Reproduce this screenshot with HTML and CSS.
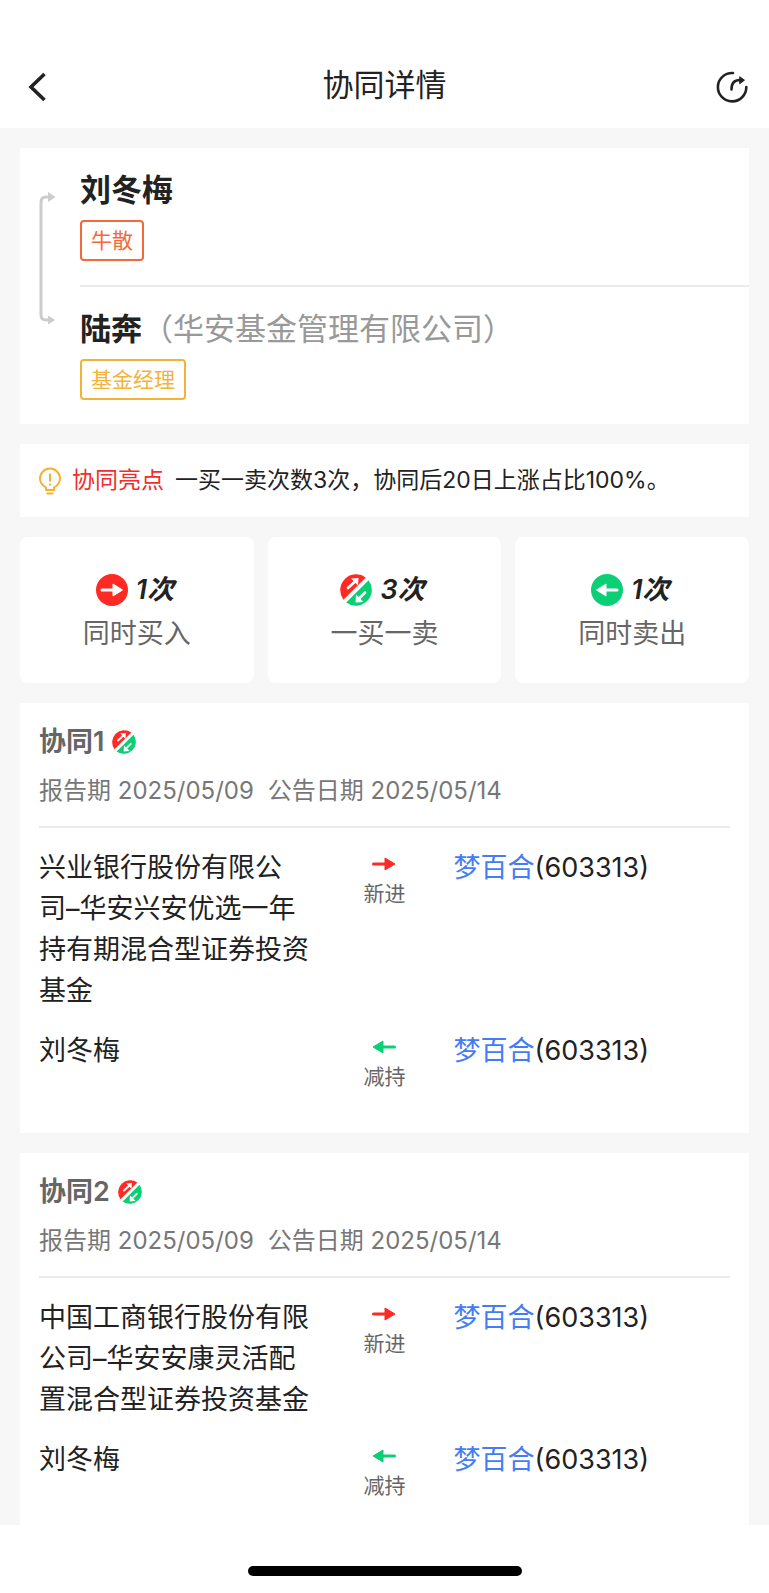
FILE: index.html
```html
<!DOCTYPE html>
<html lang="zh-CN">
<head>
  <meta charset="UTF-8">
  <meta name="viewport" content="width=device-width, initial-scale=1.0">
  <title>协同详情</title>
  <link rel="stylesheet" href="styles.css">
</head>
<body>
  <!-- Shared icons -->
  <svg class="sprite" aria-hidden="true">
    <symbol id="icon-buy" viewBox="0 0 32 32">
      <circle cx="16" cy="16" r="16" fill="#ff2a24"/>
      <path d="M6 16h14" stroke="#fff" stroke-width="3" stroke-linecap="round"/>
      <path d="M17 10l9.500 6-9.500 6z" fill="#fff" stroke="#fff" stroke-linejoin="round"/>
    </symbol>
    <symbol id="icon-sell" viewBox="0 0 32 32">
      <circle cx="16" cy="16" r="16" fill="#0acf74"/>
      <path d="M26 16H12" stroke="#fff" stroke-width="3" stroke-linecap="round"/>
      <path d="M15 10L5.500 16l9.500 6z" fill="#fff" stroke="#fff" stroke-linejoin="round"/>
    </symbol>
    <symbol id="icon-mixed" viewBox="0 0 32 32">
      <path d="M3.400 25.800A16 16 0 0 1 25.800 3.400z" fill="#ff2a24"/>
      <path d="M28.600 6.200A16 16 0 0 1 6.200 28.600z" fill="#0acf74"/>
      <path d="M8 14L14.500 8M25 18.500L19 24.500" stroke="#fff" stroke-width="2.600" stroke-linecap="round"/>
      <path d="M11 4.500l7.500-.5-.5 7.500zM16 20.500l-.5 8 8-.5z" fill="#fff"/>
    </symbol>
    <symbol id="icon-in" viewBox="0 0 24 14">
      <path d="M1.500 7H16" stroke="#ff2a24" stroke-width="3" stroke-linecap="round"/>
      <path d="M13 1l10 6-10 6z" fill="#ff2a24" stroke="#ff2a24" stroke-linejoin="round"/>
    </symbol>
    <symbol id="icon-out" viewBox="0 0 24 14">
      <path d="M22.500 7H8" stroke="#0acf74" stroke-width="3" stroke-linecap="round"/>
      <path d="M11 1L1 7l10 6z" fill="#0acf74" stroke="#0acf74" stroke-linejoin="round"/>
    </symbol>
  </svg>

  <header class="navbar">
    <button class="nav-button" type="button" aria-label="返回">
      <svg width="20" height="32" viewBox="0 0 20 32"><path d="M17.500 3L4 16l13.500 13" fill="none" stroke="#222" stroke-width="3.600"/></svg>
    </button>
    <h1>协同详情</h1>
    <button class="nav-button" type="button" aria-label="分享">
      <svg width="32" height="32" viewBox="0 0 32 32" fill="none" stroke="#222" stroke-width="2.600" stroke-linecap="round">
        <path d="M17 2A14.200 14.200 0 1 0 30.300 16"/>
        <path d="M15.500 18.500C15.500 12 18 9 24 9"/>
        <path d="M24 6l4.500 3.200L24 12.500z" fill="#222" stroke-width="1" stroke-linejoin="round"/>
      </svg>
    </button>
  </header>

  <main class="content">
    <!-- People -->
    <section class="people">
      <svg class="connector" width="18" height="136" viewBox="0 0 18 136">
        <path d="M11 7H8Q3 7 3 12V125Q3 130 8 130H11" fill="none" stroke="#ccc" stroke-width="3"/>
        <path d="M10 2l7.500 5-7.500 5zM10 125.500l7 4.500-7 4.500z" fill="#ccc"/>
      </svg>
      <div class="people-list">
        <div class="person">
          <h2>刘冬梅</h2>
          <span class="tag tag-orange">牛散</span>
        </div>
        <div class="person">
          <h2>陆奔<span class="company">（华安基金管理有限公司）</span></h2>
          <span class="tag tag-yellow">基金经理</span>
        </div>
      </div>
    </section>

    <!-- Highlight -->
    <section class="highlight">
      <svg width="22" height="28" viewBox="0 0 22 28" fill="none" stroke="#f5b22e" stroke-width="2">
        <path d="M7 23V20.500C3.500 18.500 1 15.500 1 11.500a10 10 0 0 1 20 0c0 4-2.500 7-6 9V23z" stroke-linejoin="round"/>
        <path d="M11 6.500v8M11 16.500v2M7.500 26.500h7"/>
      </svg>
      <strong>协同亮点</strong>
      <p>一买一卖次数3次，协同后20日上涨占比100%。</p>
    </section>

    <!-- Counters -->
    <section class="stats">
      <div class="stat">
        <div class="stat-value"><svg width="32" height="32"><use href="#icon-buy"/></svg><em>1次</em></div>
        <div class="stat-label">同时买入</div>
      </div>
      <div class="stat">
        <div class="stat-value"><svg width="32" height="32"><use href="#icon-mixed"/></svg><em>3次</em></div>
        <div class="stat-label">一买一卖</div>
      </div>
      <div class="stat">
        <div class="stat-value"><svg width="32" height="32"><use href="#icon-sell"/></svg><em>1次</em></div>
        <div class="stat-label">同时卖出</div>
      </div>
    </section>

    <!-- Records -->
    <section class="record">
      <h3>协同1<svg width="24" height="24"><use href="#icon-mixed"/></svg></h3>
      <p class="dates"><span>报告期 2025/05/09</span><span>公告日期 2025/05/14</span></p>
      <div class="trade">
        <div>兴业银行股份有限公司–华安兴安优选一年持有期混合型证券投资基金</div>
        <div class="action"><svg width="24" height="14"><use href="#icon-in"/></svg>新进</div>
        <div><a href="#">梦百合</a>(603313)</div>
      </div>
      <div class="trade">
        <div>刘冬梅</div>
        <div class="action"><svg width="24" height="14"><use href="#icon-out"/></svg>减持</div>
        <div><a href="#">梦百合</a>(603313)</div>
      </div>
    </section>

    <section class="record">
      <h3>协同2<svg width="24" height="24"><use href="#icon-mixed"/></svg></h3>
      <p class="dates"><span>报告期 2025/05/09</span><span>公告日期 2025/05/14</span></p>
      <div class="trade">
        <div>中国工商银行股份有限公司–华安安康灵活配置混合型证券投资基金</div>
        <div class="action"><svg width="24" height="14"><use href="#icon-in"/></svg>新进</div>
        <div><a href="#">梦百合</a>(603313)</div>
      </div>
      <div class="trade">
        <div>刘冬梅</div>
        <div class="action"><svg width="24" height="14"><use href="#icon-out"/></svg>减持</div>
        <div><a href="#">梦百合</a>(603313)</div>
      </div>
    </section>
  </main>

  <footer class="home-bar"><span></span></footer>
</body>
</html>
```
FILE: styles.css
```css
* { box-sizing: border-box; }
body {
  margin: 0;
  height: 100vh;
  display: flex;
  flex-direction: column;
  font-family: Inter, "Noto Sans CJK SC", sans-serif;
  background: #fff;
  color: #222;
}
h1, h2, h3, p { margin: 0; }
svg { display: block; flex-shrink: 0; }
.sprite { position: absolute; width: 0; height: 0; }

/* Navbar */
.navbar {
  display: flex;
  justify-content: space-between;
  align-items: flex-end;
  padding: 62px 21px 20px;
}
.navbar h1 {
  font-size: 31px;
  font-weight: 400;
  line-height: 46px;
}
.nav-button {
  display: flex;
  justify-content: center;
  align-items: center;
  width: 32px;
  height: 42px;
  padding: 0;
  border: none;
  background: none;
  cursor: pointer;
}

/* Scrolling area */
.content {
  flex: 1;
  min-height: 0;
  overflow-y: auto;
  scrollbar-width: none;
  padding: 20px 20px 0;
  background: #f7f7f7;
}
.content > section { margin-bottom: 20px; }

/* People */
.people {
  display: flex;
  background: #fff;
}
.connector { margin: 42px 24px 0 18px; }
.people-list { flex: 1; }
.person { padding: 20px 0 24px; }
.person + .person { border-top: 2px solid #ebebeb; }
.person h2 {
  font-size: 31px;
  font-weight: 700;
  line-height: 44px;
  margin-bottom: 8px;
}
.company { font-weight: 400; color: #999; }
.tag {
  display: block;
  width: fit-content;
  padding: 0 9px;
  border: 2px solid;
  border-radius: 4px;
  font-size: 21px;
  line-height: 37px;
}
.tag-orange { color: #f5683a; }
.tag-yellow { color: #f2b338; }

/* Highlight */
.highlight {
  display: flex;
  align-items: center;
  gap: 11px;
  padding: 18px 19px;
  background: #fff;
  font-size: 23px;
  line-height: 37px;
}
.highlight strong { font-weight: 400; color: #f22d2d; }

/* Counters */
.stats {
  display: grid;
  grid-template-columns: repeat(3, 1fr);
  gap: 14px;
}
.stat {
  padding: 31px 0 28px;
  border-radius: 8px;
  background: #fff;
  text-align: center;
}
.stat-value {
  display: flex;
  justify-content: center;
  align-items: center;
  gap: 8px;
  padding-right: 4px;
  font-size: 27px;
  font-weight: 600;
  line-height: 44px;
}
.stat-label {
  font-size: 27px;
  line-height: 43px;
  color: #666;
}

/* Records */
.record {
  padding: 19px 19px 41px;
  background: #fff;
}
.record h3 {
  display: flex;
  align-items: center;
  gap: 8px;
  font-size: 27px;
  font-weight: 600;
  line-height: 40px;
  color: #666;
}
.dates {
  display: flex;
  gap: 14px;
  padding: 13px 0 19px;
  border-bottom: 2px solid #ebebeb;
  font-size: 24px;
  line-height: 32px;
  color: #777;
}
.trade {
  display: grid;
  grid-template-columns: 2fr 1fr 2fr;
  margin-top: 19px;
  font-size: 27px;
  line-height: 41px;
}
.trade a { color: #447cf5; text-decoration: none; }
.action {
  display: flex;
  flex-direction: column;
  align-items: center;
  gap: 8px;
  padding-top: 10px;
  font-size: 21px;
  line-height: 30px;
  color: #666;
}

/* Home indicator */
.home-bar {
  display: flex;
  justify-content: center;
  padding: 41px 0 17px;
}
.home-bar span {
  width: 36%;
  max-width: 274px;
  height: 10px;
  border-radius: 5px;
  background: #000;
}
```
